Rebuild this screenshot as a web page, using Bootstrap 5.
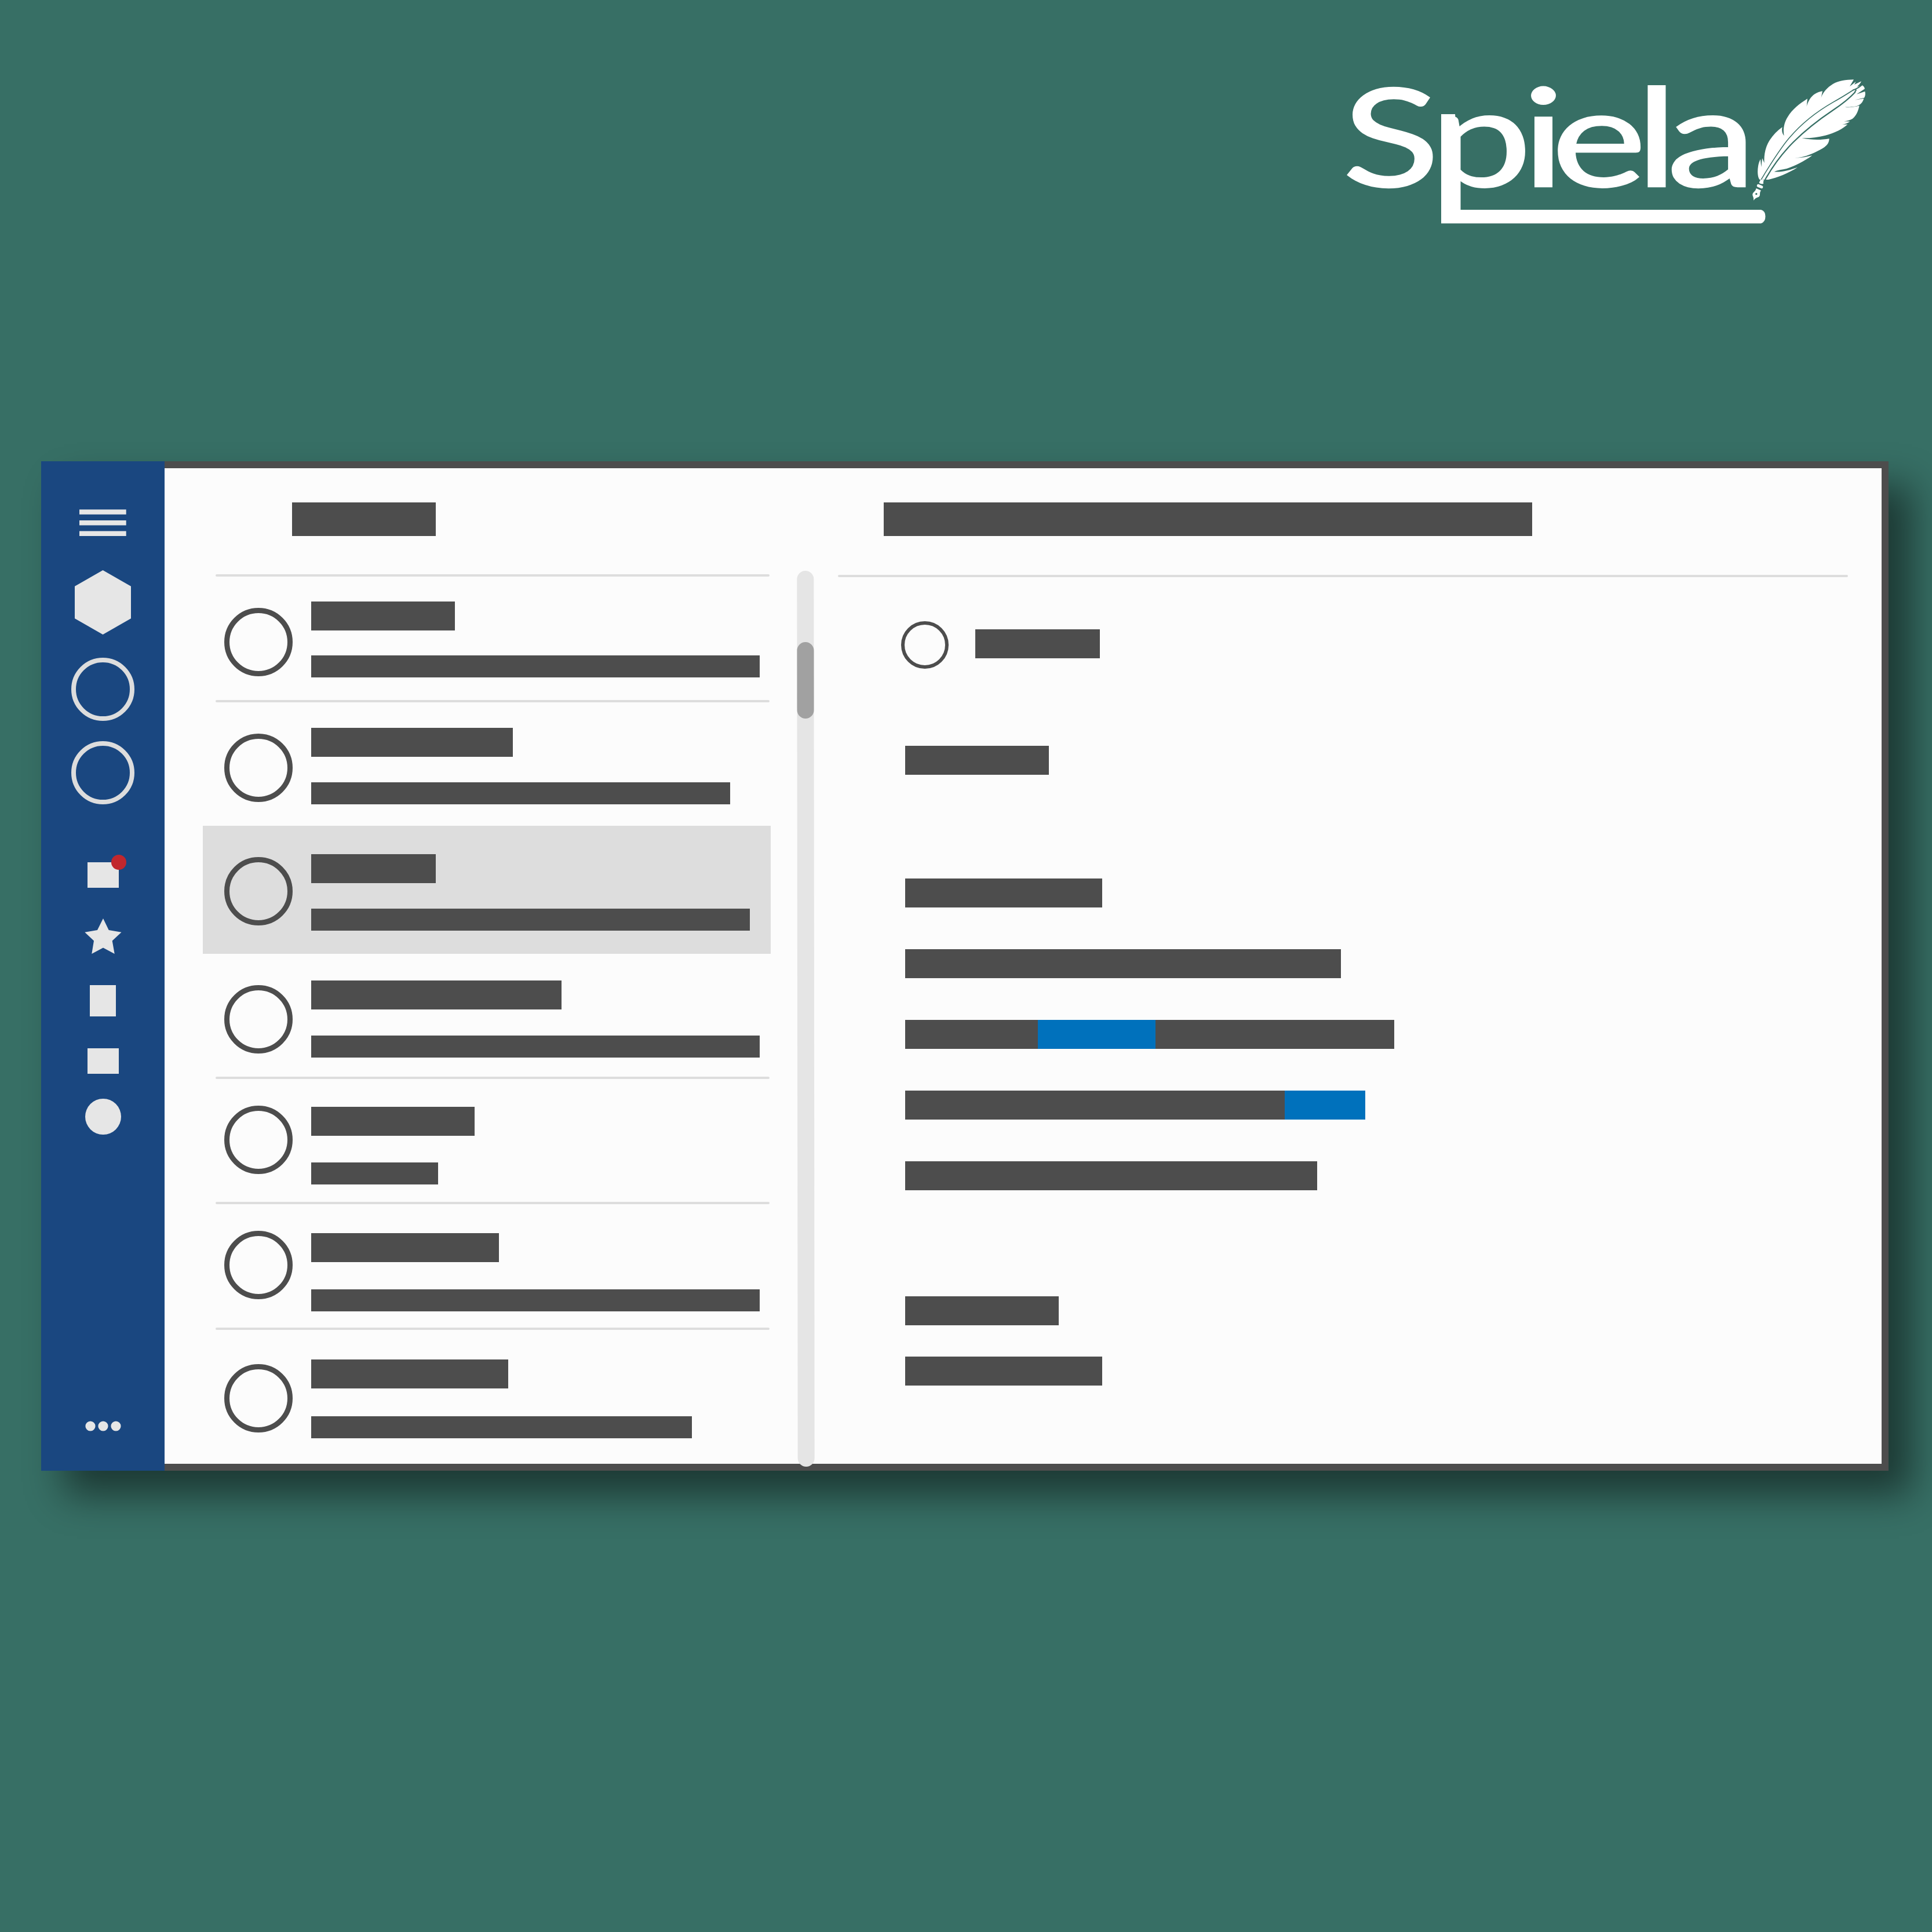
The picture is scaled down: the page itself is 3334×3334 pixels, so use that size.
<!DOCTYPE html>
<html lang="en">
<head>
<meta charset="utf-8">
<title>Spiela</title>
<link href="https://cdn.jsdelivr.net/npm/bootstrap@5.3.0/dist/css/bootstrap.min.css" rel="stylesheet">
<style>
  :root { --ink: #4d4d4d; --rule: #ddd; --pale: #e6e6e6; --link: #0071bc; --backdrop: #376f65; }
  body { background: var(--backdrop); font-family: Lato, "Open Sans", sans-serif; }
  .stage { width: 3334px; height: 3334px; }
  .brand-area { padding: 80px 104px 0 0; }
  .brand-area svg { width: 910px; height: 360px; overflow: visible; }
  .mail-window { width: 3188px; height: 1742px; margin: 356px 0 0 71px; box-shadow: 40px 42px 62px rgba(0,0,0,.49); }
  .rail { width: 213px; background: #1a4780; padding: 83px 0 68px; }
  .rail svg, .logo svg { display: block; }
  .ring-light { width: 109px; height: 109px; border: 8.6px solid var(--rule); border-radius: 50%; }
  .tile { width: 54px; height: 44px; background: var(--pale); }
  .alert-dot { width: 26px; height: 26px; top: -13px; left: 41px; background: #c1272d; }
  .gap-a { margin-top: 59px; } .gap-b { margin-top: 40px; } .gap-c { margin-top: 35px; }
  .gap-d { margin-top: 100px; } .gap-e { margin-top: 53px; } .gap-f { margin-top: 54px; }
  .gap-g { margin-top: 55px; } .gap-h { margin-top: 43px; }
  .note-tile { width: 45px; height: 54px; background: var(--pale); }
  .disc { width: 62px; height: 62px; background: var(--pale); }
  .panes { background: #fcfcfc; border: 12px solid var(--ink); border-left: 0; }
  .inbox { width: 1046px; padding-left: 66px; }
  .block { background: var(--ink); height: 50px; }
  .block-lg { height: 58px; }
  .inbox-head { height: 183px; padding: 59px 0 0 154px; }
  .rule { height: 4px; border-radius: 2px; background: var(--rule); }
  .inbox .rule { margin: 0 2px 0 22px; }
  .message { height: 213px; padding-left: 37px; gap: 32px; }
  .message .avatar { width: 118px; height: 118px; border: 9px solid var(--ink); margin-top: 54px; }
  .message .block { height: 50px; margin-top: calc(var(--t) + 1px); }
  .message .block + .block { height: 38px; margin-top: var(--g); }
  .m1 { --t: 42px; --g: 43px; } .m2 { --t: 43px; --g: 44px; }
  .m3 { --t: 48px; --g: 44px; height: 221px; background: var(--rule); }
  .m4 { --t: 45px; --g: 45px; height: 212px; } .m5 { --t: 47px; --g: 46px; height: 212px; }
  .m6 { --t: 49px; --g: 47px; } .m7 { --t: 50px; --g: 48px; height: 231px; }
  .m5 .avatar, .m6 .avatar { margin-top: 46px; } .m7 .avatar { margin-top: 59px; }
  .track { width: 29px; height: 1546px; margin: 177px 0 0 46px; border-radius: 15px; background: #e5e5e5; padding-top: 123px; transform: skewX(.05deg); }
  .thumb { height: 132px; border-radius: 15px; background: #a1a1a1; }
  .reader { margin-left: 41px; }
  .reader-head { height: 184px; padding: 59px 0 0 79px; }
  .reader .rule { width: 1743px; }
  .sender { padding: 76px 0 0 109px; gap: 46px; }
  .sender .avatar { width: 82px; height: 82px; border: 6.5px solid var(--ink); }
  .sender .block { margin-top: -4px; }
  .letter { padding: 133px 0 0 116px; }
  .letter .block { height: 50px; }
  .linked { background: var(--link); }
  .s1 { margin-top: 179px; } .s2 { margin-top: 72px; } .s3 { margin-top: 183px; } .s4 { margin-top: 54px; }
</style>
<script src="https://cdn.jsdelivr.net/npm/bootstrap@5.3.0/dist/js/bootstrap.bundle.min.js"></script>
</head>
<body>
<div class="stage">
  <header class="brand-area logo d-flex justify-content-end">
    <svg viewBox="2320 80 910 360" role="img" aria-label="Spiela">
      <g fill="#fff">
        <text transform="translate(0 322) scale(1.32 1)" x="1754.500 1870.500 1989.500 2028 2138 2179" y="0" font-family="Lato, 'Open Sans', sans-serif" font-weight="400" font-size="236" stroke="#fff" stroke-width="2.500">Spiela</text>
        <path d="M2487 197H2511L2512.500 216V362H3039Q3046.500 364 3046.500 373.500T3039 385.500H2487Z"/>
      </g>
      <g transform="translate(2780 110) scale(.33333)">
        <path fill="#fff" d="M770 600C760 590 757 560 762 530C764 515 769 503 774 494L778 535L783 489L794 514C791 470 800 430 822 395C840 368 862 346 887 328C883 345 886 360 896 373C890 340 896 305 915 275C940 235 975 208 1017 181L1013 221C1020 195 1035 170 1055 157C1068 149 1080 145 1095 142L1088 176C1095 150 1120 122 1150 104C1180 88 1215 83 1257 82L1236 118L1268 92L1260 108L1296 91C1292 101 1284 110 1274 119L1300 111C1308 115 1313 122 1314 130L1271 158L1315 143C1318 155 1317 167 1311 176L1260 188L1309 180C1303 200 1293 212 1275 218C1255 223 1230 226 1210 224C1235 228 1262 224 1286 217C1280 245 1270 270 1250 285C1240 292 1222 296 1206 298L1237 299C1225 308 1210 313 1197 314L1225 314C1200 337 1160 357 1110 371C1070 381 1030 386 988 385C1035 395 1085 396 1130 388C1130 405 1122 420 1105 432C1075 452 1035 470 1000 480C980 485 962 488 946 487C980 489 1010 483 1042 475C1000 505 955 528 910 543C885 548 862 551 845 559C885 562 925 551 966 536C920 566 860 590 815 600L798 600Z"/>
        <path fill="none" stroke="#376f65" stroke-width="4.500" d="M776 602C820 530 870 445 925 382C990 305 1070 245 1150 199C1190 177 1225 155 1256 135"/>
        <path fill="none" stroke="#376f65" stroke-width="6.500" d="M797 602C840 525 890 460 945 405C1010 340 1080 287 1150 240C1190 213 1230 184 1265 146"/>
        <path fill="none" stroke="#376f65" stroke-width="6" d="M1252 137Q1280 128 1304 105M1262 148L1270 134"/>
        <g fill="#fff">
          <path d="M775 599L793 602Q786 612 790 620Q780 626 767 617Q770 607 775 599Z"/>
          <rect x="755" y="627" width="33" height="15" rx="7" transform="rotate(22 771 634)"/>
          <path d="M752 645L777 656C766 668 777 682 764 690C752 694 744 699 738 708C740 695 736 690 733 680C732 664 748 664 752 645Z"/>
        </g>
        <circle cx="752.500" cy="674" r="5" fill="#376f65"/>
      </g>
    </svg>
  </header>

  <main class="mail-window d-flex">
    <nav class="rail d-flex flex-column align-items-center flex-shrink-0">
      <svg width="81" height="46" fill="#e6e6e6"><path d="M0 .3h80.700v8.500H0zM0 18.900h80.700v8.500H0zM0 37.400h80.700v8.500H0z"/></svg>
      <svg class="gap-a" width="97" height="111" fill="#e6e6e6"><path d="M48.500 0L97 27.800V83.300L48.500 111L0 83.300V27.800Z"/></svg>
      <div class="ring-light gap-b"></div>
      <div class="ring-light gap-c"></div>
      <div class="tile gap-d position-relative"><span class="alert-dot position-absolute rounded-circle"></span></div>
      <svg class="gap-e" width="64" height="61" fill="#e6e6e6"><path d="M32 0L41.700 20L63.500 23.700L47.700 38.400L51.700 61L32 50.600L12.300 61L16 38.400L.3 23.700L22 20Z"/></svg>
      <div class="note-tile gap-f"></div>
      <div class="tile gap-g"></div>
      <div class="disc rounded-circle gap-h"></div>
      <svg class="mt-auto" width="62" height="18" fill="#e6e6e6"><circle cx="9" cy="9" r="8.600"/><circle cx="31" cy="9" r="8.600"/><circle cx="53" cy="9" r="8.600"/></svg>
    </nav>

    <div class="panes d-flex flex-grow-1">
      <section class="inbox flex-shrink-0">
        <div class="inbox-head"><div class="block block-lg" style="width:248px"></div></div>
        <div class="rule"></div>
        <div class="message m1 d-flex"><div class="avatar rounded-circle"></div><div><div class="block" style="width:248px"></div><div class="block" style="width:774px"></div></div></div>
        <div class="rule"></div>
        <div class="message m2 d-flex"><div class="avatar rounded-circle"></div><div><div class="block" style="width:348px"></div><div class="block" style="width:723px"></div></div></div>
        <div class="message m3 d-flex"><div class="avatar rounded-circle"></div><div><div class="block" style="width:215px"></div><div class="block" style="width:757px"></div></div></div>
        <div class="message m4 d-flex"><div class="avatar rounded-circle"></div><div><div class="block" style="width:432px"></div><div class="block" style="width:774px"></div></div></div>
        <div class="rule"></div>
        <div class="message m5 d-flex"><div class="avatar rounded-circle"></div><div><div class="block" style="width:282px"></div><div class="block" style="width:219px"></div></div></div>
        <div class="rule"></div>
        <div class="message m6 d-flex"><div class="avatar rounded-circle"></div><div><div class="block" style="width:324px"></div><div class="block" style="width:774px"></div></div></div>
        <div class="rule"></div>
        <div class="message m7 d-flex"><div class="avatar rounded-circle"></div><div><div class="block" style="width:340px"></div><div class="block" style="width:657px"></div></div></div>
      </section>

      <div class="track flex-shrink-0"><div class="thumb"></div></div>

      <section class="reader">
        <div class="reader-head"><div class="block block-lg" style="width:1119px"></div></div>
        <div class="rule"></div>
        <div class="sender d-flex align-items-center"><div class="avatar rounded-circle"></div><div class="block" style="width:215px"></div></div>
        <div class="letter">
          <div class="block" style="width:248px"></div>
          <div class="block s1" style="width:340px"></div>
          <div class="block s2" style="width:752px"></div>
          <div class="block s2 d-flex" style="width:844px"><div class="linked" style="width:203px;margin-left:229px"></div></div>
          <div class="block s2 d-flex justify-content-end" style="width:794px"><div class="linked" style="width:139px"></div></div>
          <div class="block s2" style="width:711px"></div>
          <div class="block s3" style="width:265px"></div>
          <div class="block s4" style="width:340px"></div>
        </div>
      </section>
    </div>
  </main>
</div>
</body>
</html>
